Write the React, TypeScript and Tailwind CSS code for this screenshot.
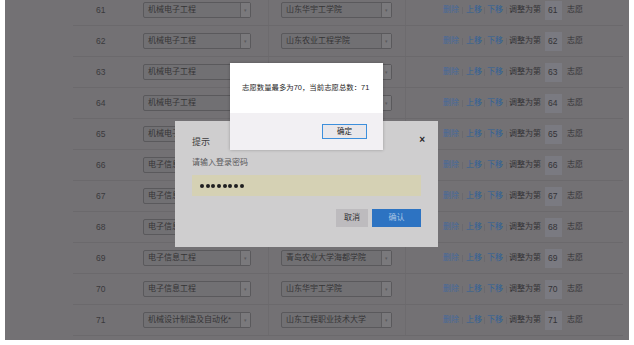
import React from "react";

const rows = [
  { n: "61", major: "机械电子工程", school: "山东华宇工学院" },
  { n: "62", major: "机械电子工程", school: "山东农业工程学院" },
  { n: "63", major: "机械电子工程", school: "山东华宇工学院" },
  { n: "64", major: "机械电子工程", school: "山东农业工程学院" },
  { n: "65", major: "机械电子工程", school: "山东华宇工学院" },
  { n: "66", major: "电子信息工程", school: "山东华宇工学院" },
  { n: "67", major: "电子信息工程", school: "山东农业工程学院" },
  { n: "68", major: "电子信息工程", school: "山东华宇工学院" },
  { n: "69", major: "电子信息工程", school: "青岛农业大学海都学院" },
  { n: "70", major: "电子信息工程", school: "山东华宇工学院" },
  { n: "71", major: "机械设计制造及自动化*", school: "山东工程职业技术大学" },
];

function Select({ text, w }: { text: string; w: string }) {
  return (
    <div className={`flex h-[16px] ${w} items-stretch rounded-[2px] border border-[#5a595c] bg-[#717073]`}>
      <div className="flex flex-1 items-center overflow-hidden whitespace-nowrap pl-[4px] text-[8px] leading-none text-[#353436]">
        {text}
      </div>
      <div className="flex w-[10px] items-center justify-center border-l border-[#5e5d60] bg-[#7a797c] text-[5px] leading-none text-[#5a595c]">
        ▾
      </div>
    </div>
  );
}

function Sep() {
  return <span className="h-[7px] w-px bg-[#6a696e]" />;
}

export default function App() {
  return (
    <div className="relative h-[345px] w-[634px] overflow-hidden bg-white font-['Liberation_Sans','Noto_Sans_CJK_SC',sans-serif]">
      <div className="ml-[5px] h-[340px] w-[624px] overflow-hidden bg-[#737174]">
        <div className="-mt-[5px] ml-[68px] w-[550px]">
          {rows.map((r) => (
            <div key={r.n} className="flex h-[31px] items-stretch border-b border-[#6b696c]">
              <div className="flex w-[60px] items-center pl-[23px] text-[8.5px] leading-none text-[#3a393c]">{r.n}</div>
              <div className="flex w-[135px] items-center pl-[10px]">
                <Select text={r.major} w="w-[108px]" />
              </div>
              <div className="flex w-[137px] items-center border-l border-[#6d6b6e] pl-[12px]">
                <Select text={r.school} w="w-[111px]" />
              </div>
              <div className="flex flex-1 items-center border-l border-[#6d6b6e] pl-[37px] text-[8px] leading-none whitespace-nowrap">
                <span className="text-[#46699c]">删除</span>
                <span className="mx-[3px] flex items-center"><Sep /></span>
                <span className="text-[#2f6198]">上移</span>
                <span className="mx-[2px] flex items-center"><Sep /></span>
                <span className="text-[#2f6198]">下移</span>
                <span className="mx-[2.5px] flex items-center"><Sep /></span>
                <span className="text-[#343336]">调整为第</span>
                <span className="ml-[4px] flex h-[19px] w-[17px] items-center overflow-hidden bg-[#7a7a81] pl-[3px] text-[8.5px] text-[#333236]">{r.n}</span>
                <span className="ml-[5px] text-[#343336]">志愿</span>
              </div>
            </div>
          ))}
        </div>
      </div>

      {/* prompt dialog */}
      <div className="absolute left-[175px] top-[121px] flex h-[126px] w-[263px] flex-col bg-[#cfcecf] px-[17px]">
        <div className="mt-[17px] flex items-center justify-between">
          <span className="text-[9px] leading-none text-[#3d3c3e]">提示</span>
          <span className="mr-[-4px] -mt-[6px] text-[10px] font-bold leading-none text-[#2a292b]">×</span>
        </div>
        <div className="mt-[12px] text-[8px] leading-none text-[#58575a]">请输入登录密码</div>
        <div className="mt-[8px] flex h-[21px] w-[229px] items-center gap-[1.7px] bg-[#d5d1b4] pl-[8px]">
          {Array.from({ length: 8 }).map((_, i) => (
            <span key={i} className="h-[4px] w-[4px] rounded-full bg-[#1f1f20]" />
          ))}
        </div>
        <div className="mt-[13px] flex justify-end gap-[4px]">
          <div className="flex h-[18px] w-[32px] items-center justify-center bg-[#bdbbbe] text-[8px] leading-none text-[#2f2e30]">取消</div>
          <div className="flex h-[18px] w-[49px] items-center justify-center bg-[#2d73c2] text-[8px] leading-none text-[#a9c5e5]">确认</div>
        </div>
      </div>

      {/* alert */}
      <div className="absolute left-[230px] top-[63px] flex h-[87px] w-[153px] flex-col bg-white shadow-[0_0_3px_rgba(0,0,0,0.25)]">
        <div className="flex h-[50px] items-center pl-[12px] text-[7.4px] leading-none whitespace-nowrap text-[#1e1e1e]">
          志愿数量最多为70，当前志愿总数：71
        </div>
        <div className="flex flex-1 items-start justify-end bg-[#f2f0f3] pr-[16px] pt-[11px]">
          <div className="flex h-[15px] w-[45px] items-center justify-center border-[1.5px] border-[#3d8fdc] bg-[#e9e7eb] text-[7.5px] leading-none text-[#222]">
            确定
          </div>
        </div>
      </div>
    </div>
  );
}
